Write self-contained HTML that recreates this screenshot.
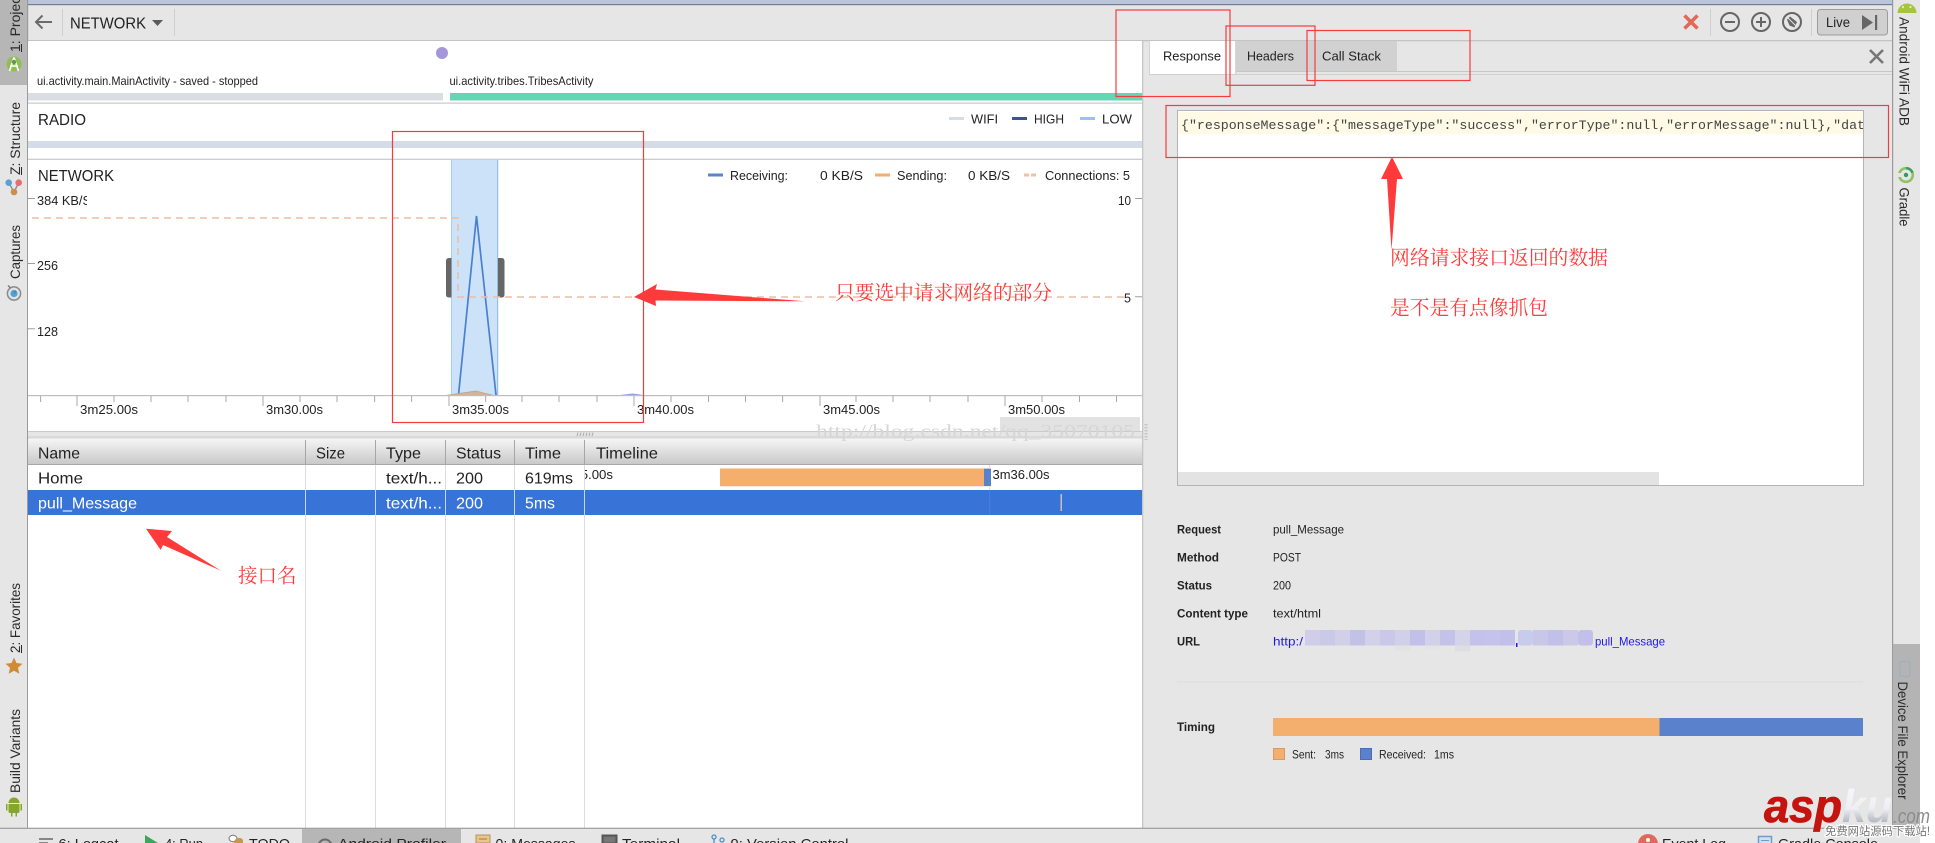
<!DOCTYPE html>
<html lang="zh">
<head>
<meta charset="utf-8">
<title>Android Profiler - Network</title>
<style>
html,body{margin:0;padding:0;background:#fff;width:1935px;height:843px;overflow:hidden}
svg{display:block}
text{font-family:"Liberation Sans","Noto Sans CJK SC",sans-serif;fill:#222;white-space:pre}
.cn{font-family:"Liberation Serif","Noto Serif CJK SC",serif;font-size:19.7px;fill:#ff3c3c}
.s13{font-size:13px}.s12{font-size:12px}.s16{font-size:16px}.s14{font-size:14px}
.side{font-size:14px;fill:#2a2a2a}
.b{font-weight:bold}
</style>
</head>
<body>
<svg xmlns="http://www.w3.org/2000/svg" width="1935" height="843" viewBox="0 0 1935 843">
<defs>
<linearGradient id="hd" x1="0" y1="0" x2="0" y2="1"><stop offset="0" stop-color="#f5f5f5"/><stop offset="1" stop-color="#c8c8c8"/></linearGradient>
<linearGradient id="ku" x1="0" y1="0" x2="0" y2="1"><stop offset="0" stop-color="#fbfbfd"/><stop offset=".55" stop-color="#eeeef4"/><stop offset="1" stop-color="#8a9098"/></linearGradient>
<clipPath id="c384"><rect x="28" y="190" width="59" height="20"/></clipPath>
<clipPath id="cTl"><rect x="585" y="465" width="60" height="24"/></clipPath>
<clipPath id="cMono"><rect x="1178" y="112" width="685" height="22"/></clipPath>
</defs>

<!-- base panels -->
<rect width="1920" height="843" fill="#e6e6e6"/>
<rect width="1892" height="4" fill="#b9c5da"/>
<rect y="4" width="1892" height="1.2" fill="#757d8c"/>
<rect x="0" y="40" width="1892" height="1.3" fill="#c4c4c4"/>

<!-- left sidebar -->
<rect x="0" y="0" width="27" height="85" fill="#b6b6b6"/>
<rect x="27" y="0" width="1.2" height="828" fill="#9a9a9a"/>

<!-- right sidebar -->
<rect x="1892" y="0" width="1.2" height="828" fill="#9a9a9a"/>
<rect x="1893" y="644" width="27" height="184" fill="#b4b4b4"/>

<!-- main chart area -->
<rect x="28" y="41" width="1114" height="390" fill="#fff"/>
<rect x="28" y="439" width="1114" height="389" fill="#fff"/>
<rect x="1142" y="41" width="1.3" height="790" fill="#c6c6c6"/>

<!-- toolbar left -->
<path d="M52 22H36M42.500 15.500L36 22l6.500 6.500" fill="none" stroke="#6b6b6b" stroke-width="2"/>
<rect x="62" y="9" width="1" height="27" fill="#cfcfcf"/>
<text x="70" y="28.700" class="s16" textLength="76" lengthAdjust="spacingAndGlyphs">NETWORK</text>
<path d="M152 20h11l-5.500 6z" fill="#5a5a5a"/>
<rect x="174" y="9" width="1" height="27" fill="#cfcfcf"/>

<!-- toolbar right -->
<path d="M1684.500 15.500l13 13M1697.500 15.500l-13 13" stroke="#e0695a" stroke-width="3.600" fill="none"/>
<rect x="1710" y="9" width="1" height="27" fill="#cfcfcf"/>
<circle cx="1730" cy="22" r="9" fill="none" stroke="#666" stroke-width="2"/>
<path d="M1725 22h10" stroke="#666" stroke-width="2"/>
<circle cx="1761" cy="22" r="9" fill="none" stroke="#666" stroke-width="2"/>
<path d="M1756 22h10M1761 17v10" stroke="#666" stroke-width="2"/>
<circle cx="1792" cy="22" r="9" fill="none" stroke="#666" stroke-width="2"/>
<path d="M1787 19.500l3-3 7 5.500-2.500 5.500-5-2z" fill="#666"/>
<path d="M1787 17l10 10" stroke="#e6e6e6" stroke-width="1"/>
<rect x="1811" y="9" width="1" height="27" fill="#cfcfcf"/>
<rect x="1817.500" y="9.500" width="70" height="25.500" rx="3" fill="#d0d0d0" stroke="#9c9c9c"/>
<text x="1826" y="27" class="s14" textLength="24" lengthAdjust="spacingAndGlyphs">Live</text>
<path d="M1862 15l11 7.500-11 7.500z" fill="#666"/>
<rect x="1875" y="15" width="2.200" height="15" fill="#666"/>

<!-- left sidebar labels -->
<text transform="translate(20,52) rotate(-90)" class="side">1: Project</text>
<path d="M21.500 44v8" stroke="#2a2a2a" stroke-width="1"/>
<circle cx="14" cy="64" r="7.500" fill="#8cc152"/>
<path d="M14 57.500L9.500 71M14 57.500L18.500 71M10 66h8" stroke="#fff" stroke-width="1.600" fill="none"/>
<circle cx="14" cy="62" r="2.200" fill="#6c8f58"/>

<text transform="translate(20,175) rotate(-90)" class="side" textLength="73" lengthAdjust="spacingAndGlyphs">Z: Structure</text>
<path d="M21.500 167v8" stroke="#2a2a2a" stroke-width="1"/>
<path d="M8.700 182.700L14 192M18.700 182.700L14 192" stroke="#8d8d8d" stroke-width="1.400"/>
<circle cx="8.700" cy="182.700" r="3.300" fill="#5aa1d8"/>
<circle cx="18.700" cy="182.700" r="3.300" fill="#e56e6e"/>
<circle cx="14" cy="192" r="3.300" fill="#c98f4e"/>

<text transform="translate(20,279) rotate(-90)" class="side" textLength="54" lengthAdjust="spacingAndGlyphs">Captures</text>
<circle cx="14" cy="293.500" r="6.600" fill="#dfe3e6" stroke="#8a8a8a" stroke-width="1.500"/>
<circle cx="14" cy="293.500" r="3.600" fill="#4ca3dd"/>
<path d="M14 293.500l2-2.500M8 285.500l2.500 2.500" stroke="#777" stroke-width="1.400"/>

<text transform="translate(20,653) rotate(-90)" class="side" textLength="70" lengthAdjust="spacingAndGlyphs">2: Favorites</text>
<path d="M21.500 645v8" stroke="#2a2a2a" stroke-width="1"/>
<path d="M14 657.500l2.500 5.500 6 .7-4.500 4 1.300 6L14 670.700 8.700 673.700l1.300-6-4.500-4 6-.7z" fill="#cf8c36"/>

<text transform="translate(20,793) rotate(-90)" class="side" textLength="84" lengthAdjust="spacingAndGlyphs">Build Variants</text>
<path d="M8.500 803a5.500 5.500 0 0 1 11 0zM8.500 804h11v7.500a1.500 1.500 0 0 1-1.500 1.500h-8a1.500 1.500 0 0 1-1.500-1.500zM6 804h1.500v6.500H6zM20.500 804H22v6.500h-1.500zM11 813h1.500v3.500H11zM15.500 813H17v3.500h-1.500z" fill="#86a62b"/>

<!-- right sidebar labels -->
<path d="M1897.500 13a9.500 9.500 0 0 1 19 0z" fill="#a6c53c"/>
<circle cx="1903" cy="7" r="1.100" fill="#e6e6e6"/><circle cx="1910.500" cy="7" r="1.100" fill="#e6e6e6"/>
<text transform="translate(1899.500,17) rotate(90)" class="side" textLength="109" lengthAdjust="spacingAndGlyphs">Android WiFi ADB</text>
<circle cx="1906" cy="175" r="6.800" fill="none" stroke="#8fc263" stroke-width="2.600"/>
<path d="M1906 168.200a6.800 6.800 0 0 1 6.500 4.500" fill="none" stroke="#3b9d6d" stroke-width="2.600"/>
<circle cx="1906" cy="175" r="2.200" fill="#2f9a68"/>
<rect x="1898" y="173" width="3" height="4" fill="#e6e6e6"/>
<text transform="translate(1899.500,187.500) rotate(90)" class="side" textLength="39" lengthAdjust="spacingAndGlyphs">Gradle</text>
<rect x="1900" y="661.500" width="10" height="15" rx="2" fill="none" stroke="#a4b0b8" stroke-width="1.500"/>
<text transform="translate(1898,681.500) rotate(90)" class="side" textLength="118" lengthAdjust="spacingAndGlyphs">Device File Explorer</text>

<!-- event row -->
<circle cx="442" cy="53" r="6" fill="#a596da"/>
<text x="37" y="85" class="s12" textLength="221" lengthAdjust="spacingAndGlyphs">ui.activity.main.MainActivity - saved - stopped</text>
<text x="449.500" y="85" class="s12" textLength="144" lengthAdjust="spacingAndGlyphs">ui.activity.tribes.TribesActivity</text>
<rect x="28" y="93" width="415" height="7.500" fill="#dadde1"/>
<rect x="450" y="93" width="692" height="7.500" fill="#64d6b4"/>
<rect x="28" y="102.500" width="1114" height="1.200" fill="#c8c8c8"/>

<!-- radio -->
<text x="38" y="125" class="s16" textLength="48" lengthAdjust="spacingAndGlyphs">RADIO</text>
<rect x="28" y="141" width="1114" height="7" fill="#d3dce8"/>
<rect x="28" y="158.700" width="1114" height="1.200" fill="#c8c8c8"/>
<rect x="949" y="117" width="15" height="3" fill="#d3dce8"/>
<text x="971" y="123.500" class="s13" textLength="27" lengthAdjust="spacingAndGlyphs">WIFI</text>
<rect x="1012" y="117" width="15" height="3" fill="#37558f"/>
<text x="1034" y="123.500" class="s13" textLength="30" lengthAdjust="spacingAndGlyphs">HIGH</text>
<rect x="1080" y="117" width="15" height="3" fill="#9dbff5"/>
<text x="1102" y="123.500" class="s13" textLength="30" lengthAdjust="spacingAndGlyphs">LOW</text>

<!-- network chart -->
<rect x="451" y="160" width="47" height="235" fill="#cbe2f8"/>
<rect x="451" y="160" width="1" height="235" fill="#a9cff0"/>
<rect x="497" y="160" width="1.200" height="235" fill="#93bfec"/>
<path d="M451.500 258h-2.500q-3 0-3 3v33.500q0 3 3 3h2.500zM498 258h3.500q3 0 3 3v33.500q0 3-3 3H498z" fill="#666"/>
<path d="M458.500 395L476.500 216 496 395" fill="none" stroke="#4a7fd2" stroke-width="1.700"/>
<path d="M446 395.300L476 391 493 395.300z" fill="#d6b296" stroke="#c99e7c" stroke-width=".7"/>
<path d="M620 395l13-1.500 10 1.500z" fill="#8fa7d6"/>
<text x="38" y="181" class="s16" textLength="76" lengthAdjust="spacingAndGlyphs">NETWORK</text>

<text x="37" y="205" class="s13" clip-path="url(#c384)" textLength="54" lengthAdjust="spacingAndGlyphs">384 KB/S</text>
<text x="37" y="270" class="s13" textLength="21" lengthAdjust="spacingAndGlyphs">256</text>
<text x="37" y="336" class="s13" textLength="21" lengthAdjust="spacingAndGlyphs">128</text>
<path d="M28 198.500h7M28 263.500h7M28 328.700h7M1135 198.500h7M1135 296.700h7" stroke="#9e9e9e" stroke-width="1"/>
<text x="1118" y="205" class="s13" textLength="13" lengthAdjust="spacingAndGlyphs">10</text>
<text x="1124" y="302.500" class="s13" textLength="7" lengthAdjust="spacingAndGlyphs">5</text>

<path d="M32 218H458V297H1125" fill="none" stroke="#ecbda9" stroke-width="1.500" stroke-dasharray="7 5"/>

<rect x="708" y="173.500" width="15" height="3" fill="#5b84cc"/>
<text x="730" y="180" class="s13" textLength="58" lengthAdjust="spacingAndGlyphs">Receiving:</text>
<text x="820" y="180" class="s13" textLength="43" lengthAdjust="spacingAndGlyphs">0 KB/S</text>
<rect x="875" y="173.500" width="15" height="3" fill="#f4ae6e"/>
<text x="897" y="180" class="s13" textLength="50" lengthAdjust="spacingAndGlyphs">Sending:</text>
<text x="968" y="180" class="s13" textLength="42" lengthAdjust="spacingAndGlyphs">0 KB/S</text>
<path d="M1024 175h5M1031 175h5" stroke="#efbfab" stroke-width="3"/>
<text x="1045" y="180" class="s13" textLength="85" lengthAdjust="spacingAndGlyphs">Connections: 5</text>

<!-- axis -->
<rect x="28" y="395" width="1114" height="1.200" fill="#bdbdbd"/>
<path d="M40.600 396v6M114 396v6M151 396v6M188 396v6M226 396v6M300 396v6M337 396v6M374.600 396v6M411.600 396v6M485.700 396v6M522 396v6M559 396v6M597 396v6M671 396v6M708.500 396v6M745.500 396v6M782.600 396v6M856 396v6M893 396v6M930 396v6M968 396v6M1042 396v6M1079.500 396v6M1116.500 396v6M77 396v10M263 396v10M449 396v10M634 396v10M820 396v10M1005 396v10" stroke="#a8a8a8" stroke-width="1" fill="none"/>
<text x="80" y="414" class="s13" textLength="58" lengthAdjust="spacingAndGlyphs">3m25.00s</text>
<text x="266" y="414" class="s13" textLength="57" lengthAdjust="spacingAndGlyphs">3m30.00s</text>
<text x="452" y="414" class="s13" textLength="57" lengthAdjust="spacingAndGlyphs">3m35.00s</text>
<text x="637" y="414" class="s13" textLength="57" lengthAdjust="spacingAndGlyphs">3m40.00s</text>
<text x="823" y="414" class="s13" textLength="57" lengthAdjust="spacingAndGlyphs">3m45.00s</text>
<text x="1008" y="414" class="s13" textLength="57" lengthAdjust="spacingAndGlyphs">3m50.00s</text>

<!-- splitter + watermark box -->
<rect x="1000" y="417" width="140" height="14" fill="#e2e2e2"/>
<rect x="28" y="431" width="1114" height="6.500" fill="#e6e6e6"/>
<rect x="28" y="431" width="1114" height="1" fill="#cbcbcb"/>
<rect x="28" y="436.500" width="1114" height="1" fill="#cfcfcf"/>
<path d="M578 432.500l-1 3.500M581 432.500l-1 3.500M584 432.500l-1 3.500M587 432.500l-1 3.500M590 432.500l-1 3.500M593 432.500l-1 3.500" stroke="#a9a9a9" stroke-width="1"/>

<!-- table -->
<rect x="28" y="439" width="1114" height="25.500" fill="url(#hd)"/>
<rect x="28" y="464" width="1114" height="1" fill="#a8a8a8"/>
<path d="M305.500 440v24M375.500 440v24M445.500 440v24M514.500 440v24M584.500 440v24" stroke="#a6a6a6" stroke-width="1"/>
<text x="38" y="458.500" class="s16" textLength="42" lengthAdjust="spacingAndGlyphs">Name</text>
<text x="316" y="458.500" class="s16" textLength="29" lengthAdjust="spacingAndGlyphs">Size</text>
<text x="386" y="458.500" class="s16" textLength="35" lengthAdjust="spacingAndGlyphs">Type</text>
<text x="456" y="458.500" class="s16" textLength="45" lengthAdjust="spacingAndGlyphs">Status</text>
<text x="525" y="458.500" class="s16" textLength="36" lengthAdjust="spacingAndGlyphs">Time</text>
<text x="596" y="458.500" class="s16" textLength="62" lengthAdjust="spacingAndGlyphs">Timeline</text>

<rect x="28" y="490" width="1114" height="25" fill="#3874d8"/>
<path d="M305.500 465v25M375.500 465v25M445.500 465v25M514.500 465v25M584.500 465v25M305.500 515v313M375.500 515v313M445.500 515v313M514.500 515v313M584.500 515v313" stroke="#dcdcdc" stroke-width="1"/>
<path d="M305.500 490v25M375.500 490v25M445.500 490v25M514.500 490v25M584.500 490v25" stroke="#c6d6f0" stroke-width="1"/>
<path d="M989.600 465v25" stroke="#e2e2e2"/>
<path d="M989.600 490v25" stroke="#4a7edb"/>

<text x="38" y="483.500" class="s16" textLength="45" lengthAdjust="spacingAndGlyphs">Home</text>
<text x="386" y="483.500" class="s16" textLength="56" lengthAdjust="spacingAndGlyphs">text/h...</text>
<text x="456" y="483.500" class="s16" textLength="27" lengthAdjust="spacingAndGlyphs">200</text>
<text x="525" y="483.500" class="s16" textLength="48" lengthAdjust="spacingAndGlyphs">619ms</text>

<text x="38" y="508.500" class="s16" style="fill:#fff" textLength="99" lengthAdjust="spacingAndGlyphs">pull_Message</text>
<text x="386" y="508.500" class="s16" style="fill:#fff" textLength="56" lengthAdjust="spacingAndGlyphs">text/h...</text>
<text x="456" y="508.500" class="s16" style="fill:#fff" textLength="27" lengthAdjust="spacingAndGlyphs">200</text>
<text x="525" y="508.500" class="s16" style="fill:#fff" textLength="30" lengthAdjust="spacingAndGlyphs">5ms</text>

<text x="555" y="479" class="s13" clip-path="url(#cTl)" textLength="58" lengthAdjust="spacingAndGlyphs">3m35.00s</text>
<rect x="720" y="467.700" width="271" height="19.300" fill="#fbe8d6"/>
<rect x="720" y="468.700" width="264" height="17.300" fill="#f4ae6e"/>
<rect x="984" y="468.700" width="7" height="17.300" fill="#5a82cc"/>
<text x="992.500" y="479" class="s13" textLength="57" lengthAdjust="spacingAndGlyphs">3m36.00s</text>
<rect x="1060.500" y="494" width="1.500" height="17" fill="#cbbfb4"/>

<!-- watermark -->
<text x="816" y="437" style="font-family:'Liberation Serif',serif;font-size:18px;fill:#d6d6d6" textLength="319" lengthAdjust="spacingAndGlyphs">http://blog.csdn.net/qq_35070105</text>
<path d="M1146 424v16" stroke="#c6c6c6" stroke-width="3" stroke-dasharray="1.500 1.500"/>

<!-- right tabs -->
<rect x="1149" y="41" width="86" height="33" fill="#fff"/>
<rect x="1235" y="41" width="1.200" height="33" fill="#d4d4d4"/>
<rect x="1236" y="41" width="161" height="30" fill="#d1d1d1"/>
<rect x="1149" y="41" width="1" height="33" fill="#d4d4d4"/>
<rect x="1236" y="71" width="656" height="1" fill="#c6c6c6"/>
<rect x="1149" y="74" width="743" height="1" fill="#d0d0d0"/>
<rect x="1235.500" y="71" width="1" height="3" fill="#d4d4d4"/>
<text x="1163" y="60.500" class="s13" textLength="58" lengthAdjust="spacingAndGlyphs">Response</text>
<text x="1247" y="60.500" class="s13" textLength="47" lengthAdjust="spacingAndGlyphs">Headers</text>
<text x="1322" y="60.500" class="s13" textLength="59" lengthAdjust="spacingAndGlyphs">Call Stack</text>
<path d="M1870 50l13 13M1883 50l-13 13" stroke="#777" stroke-width="2.600"/>

<!-- response box -->
<rect x="1177.500" y="110.500" width="686" height="375" fill="#fff" stroke="#b4b4b4"/>
<rect x="1178" y="112" width="685" height="22" fill="#fefae6"/>
<text x="1181" y="129" clip-path="url(#cMono)" style="font-family:'Liberation Mono',monospace;font-size:13px;fill:#444" textLength="684" lengthAdjust="spacingAndGlyphs">{&quot;responseMessage&quot;:{&quot;messageType&quot;:&quot;success&quot;,&quot;errorType&quot;:null,&quot;errorMessage&quot;:null},&quot;dat</text>
<rect x="1178" y="472" width="481" height="13" fill="#e3e3e3"/>

<!-- details -->
<text x="1177" y="533.500" class="s12 b" textLength="44" lengthAdjust="spacingAndGlyphs">Request</text>
<text x="1273" y="533.500" class="s12" textLength="71" lengthAdjust="spacingAndGlyphs">pull_Message</text>
<text x="1177" y="561.500" class="s12 b" textLength="42" lengthAdjust="spacingAndGlyphs">Method</text>
<text x="1273" y="561.500" class="s12" textLength="28" lengthAdjust="spacingAndGlyphs">POST</text>
<text x="1177" y="589.500" class="s12 b" textLength="35" lengthAdjust="spacingAndGlyphs">Status</text>
<text x="1273" y="589.500" class="s12" textLength="18" lengthAdjust="spacingAndGlyphs">200</text>
<text x="1177" y="617.500" class="s12 b" textLength="71" lengthAdjust="spacingAndGlyphs">Content type</text>
<text x="1273" y="617.500" class="s12" textLength="48" lengthAdjust="spacingAndGlyphs">text/html</text>
<text x="1177" y="645.500" class="s12 b" textLength="23" lengthAdjust="spacingAndGlyphs">URL</text>
<text x="1273" y="645.500" class="s12" style="fill:#1a1aee" textLength="30" lengthAdjust="spacingAndGlyphs">http:/</text>
<text x="1595" y="645.500" class="s12" style="fill:#1a1aee" textLength="70" lengthAdjust="spacingAndGlyphs">pull_Message</text>
<rect x="1516" y="643" width="1.500" height="4" fill="#1a1aee"/>
<g>
<rect x="1305" y="630" width="15" height="15.500" fill="#cfcde9"/><rect x="1320" y="630" width="15" height="15.500" fill="#cbc9e8"/><rect x="1335" y="630" width="15" height="15.500" fill="#d1d0e8"/><rect x="1350" y="630" width="15" height="15.500" fill="#c4c1e9"/><rect x="1365" y="630" width="15" height="15.500" fill="#d2d1e9"/><rect x="1380" y="630" width="15" height="15.500" fill="#cac8e8"/><rect x="1395" y="630" width="15" height="15.500" fill="#d1d0e8"/><rect x="1410" y="630" width="15" height="15.500" fill="#c2bfe9"/><rect x="1425" y="630" width="15" height="15.500" fill="#d2d1e9"/><rect x="1440" y="630" width="15" height="15.500" fill="#c5c2ea"/><rect x="1455" y="630" width="15" height="15.500" fill="#d4d3e9"/><rect x="1470" y="630" width="15" height="15.500" fill="#c4c1ea"/><rect x="1485" y="630" width="15" height="15.500" fill="#c5c2eb"/><rect x="1500" y="630" width="15" height="15.500" fill="#c2bfea"/>
<rect x="1518" y="630" width="15" height="15.500" rx="3" fill="#c8ccec"/><rect x="1533" y="630" width="15" height="15.500" fill="#c9c7e8"/><rect x="1548" y="630" width="15" height="15.500" fill="#c2bfe8"/><rect x="1563" y="630" width="15" height="15.500" fill="#ccc9e8"/><rect x="1578" y="630" width="15" height="15.500" rx="3" fill="#c2c0ea"/>
<rect x="1395" y="645.500" width="15" height="5" fill="#e2e2e4"/><rect x="1425" y="645.500" width="15" height="4" fill="#e4e4e6"/><rect x="1455" y="645.500" width="15" height="6" fill="#dedee2"/>
</g>
<rect x="1177" y="681.500" width="686" height="1" fill="#dcdcdc"/>

<text x="1177" y="731" class="s12 b" textLength="38" lengthAdjust="spacingAndGlyphs">Timing</text>
<rect x="1273" y="718" width="387" height="18" fill="#f4ae6e"/>
<rect x="1659.500" y="718" width="203.500" height="18" fill="#5a82cc"/>
<rect x="1273.500" y="748.500" width="11" height="11" fill="#f4ae6e" stroke="#d99a60"/>
<text x="1292" y="758.300" class="s12" textLength="24" lengthAdjust="spacingAndGlyphs">Sent:</text>
<text x="1325" y="758.300" class="s12" textLength="19" lengthAdjust="spacingAndGlyphs">3ms</text>
<rect x="1360.500" y="748.500" width="11" height="11" fill="#5a82cc" stroke="#4a6fb0"/>
<text x="1379" y="758.300" class="s12" textLength="47" lengthAdjust="spacingAndGlyphs">Received:</text>
<text x="1434" y="758.300" class="s12" textLength="20" lengthAdjust="spacingAndGlyphs">1ms</text>

<!-- bottom bar -->
<rect x="0" y="828" width="1920" height="15" fill="#e6e6e6"/>
<rect x="302" y="829" width="159" height="14" fill="#b6b6b6"/>
<rect x="0" y="827.700" width="1920" height="1.200" fill="#9c9c9c"/>
<path d="M39 839h14M39 843h9" stroke="#666" stroke-width="1.500"/>
<text x="58.500" y="848.500" class="s14" textLength="60" lengthAdjust="spacingAndGlyphs">6: Logcat</text>
<path d="M145 835l13 8h-13z" fill="#3ba75a"/>
<text x="165" y="848.500" class="s14" textLength="38" lengthAdjust="spacingAndGlyphs">4: Run</text>
<ellipse cx="233" cy="838.500" rx="4" ry="3.200" fill="#fff" stroke="#777"/>
<path d="M234 843a5 5 0 0 1 9-3v3z" fill="#c39a4a"/>
<text x="249" y="848.500" class="s14" textLength="41" lengthAdjust="spacingAndGlyphs">TODO</text>
<circle cx="325" cy="846" r="6.500" fill="none" stroke="#6a6a6a" stroke-width="2"/>
<text x="338" y="848.500" class="s14" textLength="108" lengthAdjust="spacingAndGlyphs">Android Profiler</text>
<rect x="476" y="835" width="14" height="8" fill="#e7c58f" stroke="#b9935a"/>
<path d="M479 839h8" stroke="#a07a44"/>
<text x="495.500" y="848.500" class="s14" textLength="80" lengthAdjust="spacingAndGlyphs">0: Messages</text>
<rect x="602.500" y="835.500" width="14" height="8" fill="#777" stroke="#555" stroke-width="2"/>
<text x="622" y="848.500" class="s14" textLength="58" lengthAdjust="spacingAndGlyphs">Terminal</text>
<circle cx="714" cy="837" r="2" fill="none" stroke="#4a90c8" stroke-width="1.300"/>
<path d="M714 839v5" stroke="#4a90c8" stroke-width="1.300"/>
<circle cx="722" cy="840" r="2" fill="none" stroke="#4a90c8" stroke-width="1.300"/>
<text x="730.500" y="848.500" class="s14" textLength="118" lengthAdjust="spacingAndGlyphs">9: Version Control</text>
<circle cx="1648" cy="844" r="10" fill="#e0695c"/>
<circle cx="1648" cy="840" r="2" fill="#fff"/>
<text x="1662" y="848.500" class="s14" textLength="64" lengthAdjust="spacingAndGlyphs">Event Log</text>
<rect x="1758.500" y="836.500" width="13" height="8" fill="#cfe0f0" stroke="#6a9ecf" stroke-width="1.500"/>
<path d="M1761 840.500h8" stroke="#6a9ecf"/>
<text x="1778" y="848.500" class="s14" textLength="100" lengthAdjust="spacingAndGlyphs">Gradle Console</text>

<!-- red annotation rectangles -->
<g fill="none" stroke="#f43c3c" stroke-width="1.200">
<rect x="392.500" y="131.500" width="251" height="291"/>
<rect x="1116" y="10" width="114" height="86.500"/>
<rect x="1226" y="26" width="89" height="59.300"/>
<rect x="1307" y="30.500" width="163" height="50"/>
<rect x="1166" y="105.500" width="722.500" height="52"/>
</g>

<!-- red arrows -->
<g fill="#ff3a3a">
<path d="M634 297L657 284 655.500 289.500 805 301.300 655.500 300.500 656 306z"/>
<path d="M1392 156.700L1403 179H1397L1391.500 250 1387 179H1381z"/>
<path d="M146 528.700L172 531 167 537 221 570.700 163 545 160.700 550z"/>
</g>

<!-- Chinese notes -->
<text x="835" y="299.500" class="cn" textLength="217" lengthAdjust="spacingAndGlyphs">只要选中请求网络的部分</text>
<text x="1390" y="264.500" class="cn" textLength="218" lengthAdjust="spacingAndGlyphs">网络请求接口返回的数据</text>
<text x="1390" y="314.500" class="cn" textLength="158" lengthAdjust="spacingAndGlyphs">是不是有点像抓包</text>
<text x="238" y="582.500" class="cn" textLength="58.500" lengthAdjust="spacingAndGlyphs">接口名</text>

<!-- aspku logo -->
<text x="1764" y="822" style="font-size:46px;font-weight:bold;font-style:italic;fill:#c5140f;stroke:#c5140f;stroke-width:.8px" textLength="78" lengthAdjust="spacingAndGlyphs">asp</text>
<text x="1842" y="822" style="font-size:46px;font-weight:bold;font-style:italic;fill:url(#ku)" textLength="50" lengthAdjust="spacingAndGlyphs">ku</text>
<text x="1893" y="823" style="font-size:20px;font-style:italic;fill:#8c8c8c" textLength="37" lengthAdjust="spacingAndGlyphs">.com</text>
<text x="1825" y="835" style="font-family:'Liberation Sans','Noto Sans CJK SC',sans-serif;font-size:11.500px;fill:#777;stroke:#fff;stroke-width:2.200px;paint-order:stroke" textLength="105" lengthAdjust="spacingAndGlyphs">免费网站源码下载站!</text>
</svg>
</body>
</html>
